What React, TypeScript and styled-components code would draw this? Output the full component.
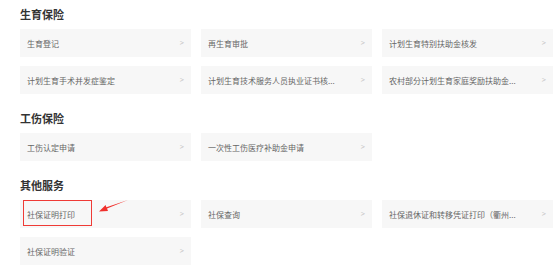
import { createGlobalStyle, styled } from "styled-components";

const GlobalStyle = createGlobalStyle`
  html, body {
    margin: 0;
    padding: 0;
    background: #ffffff;
  }
  body {
    font-family: "Noto Sans CJK SC", "Noto Sans", sans-serif;
  }
`;

interface Item {
  label: string;
  marked?: boolean;
}

interface Group {
  title: string;
  items: Item[];
}

const groups: Group[] = [
  {
    title: "生育保险",
    items: [
      { label: "生育登记" },
      { label: "再生育审批" },
      { label: "计划生育特别扶助金核发" },
      { label: "计划生育手术并发症鉴定" },
      { label: "计划生育技术服务人员执业证书核..." },
      { label: "农村部分计划生育家庭奖励扶助金..." },
    ],
  },
  {
    title: "工伤保险",
    items: [{ label: "工伤认定申请" }, { label: "一次性工伤医疗补助金申请" }],
  },
  {
    title: "其他服务",
    items: [
      { label: "社保证明打印", marked: true },
      { label: "社保查询" },
      { label: "社保退休证和转移凭证打印（衢州..." },
      { label: "社保证明验证" },
    ],
  },
];

export default function App() {
  return (
    <>
      <GlobalStyle />
      <Page>
        {groups.map((group) => (
          <Section key={group.title}>
            <Heading>{group.title}</Heading>
            <Grid>
              {group.items.map((item) => (
                <Card key={item.label}>
                  <Label>{item.label}</Label>
                  <Chevron>&gt;</Chevron>
                  {item.marked && (
                    <>
                      <Highlight />
                      <Arrow viewBox="0 0 32 14" width="32" height="14">
                        <path d="M30 1 L9 9.4 L10 12 L1 12.6 L7.6 6 L8.4 8.2 Z" fill="#f0302c" />
                      </Arrow>
                    </>
                  )}
                </Card>
              ))}
            </Grid>
          </Section>
        ))}
      </Page>
    </>
  );
}

const Page = styled.div`
  width: 558px;
  height: 271px;
  box-sizing: border-box;
  padding: 7px 0 0 20px;
  display: flex;
  flex-direction: column;
  gap: 17px;
  overflow: hidden;
`;

const Section = styled.section`
  display: flex;
  flex-direction: column;
  gap: 8px;
`;

const Heading = styled.h3`
  margin: 0;
  font-size: 11px;
  line-height: 14px;
  font-weight: 700;
  color: #333333;
`;

const Grid = styled.div`
  display: grid;
  grid-template-columns: repeat(3, 171px);
  column-gap: 10px;
  row-gap: 9px;
`;

const Card = styled.div`
  position: relative;
  height: 28px;
  box-sizing: border-box;
  padding: 0 6px 0 7px;
  background: #f7f7f7;
  display: flex;
  align-items: center;
  justify-content: space-between;
`;

const Label = styled.span`
  font-size: 8px;
  color: #666666;
  white-space: nowrap;
`;

const Chevron = styled.span`
  font-family: "DejaVu Sans", sans-serif;
  font-size: 7px;
  line-height: 7px;
  padding-top: 1px;
  color: #c4c4c4;
  transform: scaleX(0.8);
`;

const Highlight = styled.div`
  position: absolute;
  left: 3px;
  top: 0;
  width: 69px;
  height: 26px;
  box-sizing: border-box;
  border: 1.5px solid #ef3b36;
`;

const Arrow = styled.svg`
  position: absolute;
  left: 78px;
  top: -1px;
`;
